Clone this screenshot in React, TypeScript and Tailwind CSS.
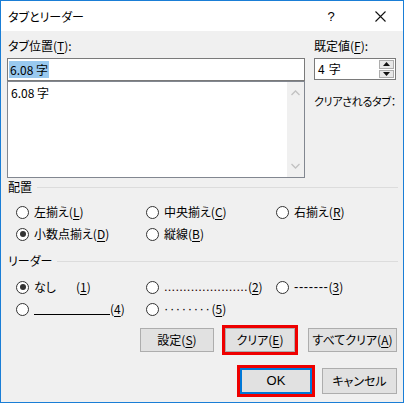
import React from 'react';

// Underlined access key inside a label
const Key: React.FC<{ k: string }> = ({ k }) => (
  <span className="underline underline-offset-[2px] decoration-1">{k}</span>
);

const Radio: React.FC<{ checked?: boolean }> = ({ checked }) => (
  <span className="w-[13px] h-[13px] rounded-full border border-[#333333] bg-white flex items-center justify-center shrink-0">
    {checked && <span className="w-[6px] h-[6px] rounded-full bg-[#333333]" />}
  </span>
);

const GroupHeader: React.FC<{ label: string }> = ({ label }) => (
  <div className="flex items-center h-[16px] pl-[1px]">
    <span>{label}</span>
    <span className="flex-1 h-px bg-[#dcdcdc] ml-[5px] mr-[-1px]" />
  </div>
);

const Option: React.FC<{ checked?: boolean; children: React.ReactNode }> = ({ checked, children }) => (
  <div className="flex items-center h-[20px]">
    <Radio checked={checked} />
    <span className="ml-[5px] flex items-center whitespace-nowrap">{children}</span>
  </div>
);

const Btn: React.FC<{ w: string; h?: string; focused?: boolean; children: React.ReactNode }> = ({ w, h = 'h-[24px]', focused, children }) => (
  <div
    className={`${w} ${h} flex items-center justify-center bg-[#e1e1e1] ${
      focused ? 'border-2 border-[#0078d7]' : 'border border-[#adadad]'
    }`}
  >
    {children}
  </div>
);

const RedFrame: React.FC<{ children: React.ReactNode }> = ({ children }) => (
  <div className="border-[3px] border-[#ee0000]">{children}</div>
);

const App: React.FC = () => {
  return (
    <div className="w-[404px] h-[403px] border border-[#1a7ed6] bg-[#f0f0f0] flex flex-col text-[12px] leading-[16px] text-black font-['Noto_Sans_CJK_JP',sans-serif] [font-feature-settings:'palt'] overflow-hidden">
      {/* title bar */}
      <div className="h-[30px] bg-white flex items-center pl-[7px] shrink-0">
        <span className="flex-1 mt-[1px]">タブとリーダー</span>
        <span className="w-[14px] text-center font-['Liberation_Sans',sans-serif] text-[13px] mr-[37px] mt-[1px]">?</span>
        <svg width="11" height="11" viewBox="0 0 11 11" className="mr-[17px]">
          <path d="M0.5 0.5 L10.5 10.5 M10.5 0.5 L0.5 10.5" stroke="#111" strokeWidth="1.1" fill="none" />
        </svg>
      </div>

      <div className="flex-1 flex flex-col pl-[6px] pr-[6px]">
        {/* tab stop position + default */}
        <div className="flex mt-[7px]">
          <div className="w-[298px] flex flex-col">
            <div className="h-[16px] pl-[1px]">
              タブ位置(<Key k="T" />):
            </div>
            <div className="mt-[4px] h-[23px] border border-[#7a7a7a] bg-white flex items-center pl-[1px]">
              <span className="bg-[#99c9ef] h-[17px] px-[1px] flex items-center">6.08 字</span>
            </div>
            <div className="h-[97px] border border-[#828790] bg-white flex">
              <div className="flex-1 pl-[3px] pt-[3px]">6.08 字</div>
              <div className="w-[17px] bg-[#f0f0f0] flex flex-col items-center justify-between py-[8px]">
                <svg width="9" height="6" viewBox="0 0 9 6">
                  <path d="M0.5 5 L4.5 1 L8.5 5" stroke="#c2c2c2" strokeWidth="1.3" fill="none" />
                </svg>
                <svg width="9" height="6" viewBox="0 0 9 6">
                  <path d="M0.5 1 L4.5 5 L8.5 1" stroke="#c2c2c2" strokeWidth="1.3" fill="none" />
                </svg>
              </div>
            </div>
          </div>

          <div className="ml-[9px] w-[82px] flex flex-col">
            <div className="h-[16px]">
              既定値(<Key k="F" />):
            </div>
            <div className="mt-[4px] h-[22px] w-[82px] border border-[#7a7a7a] bg-white flex items-center">
              <span className="flex-1 pl-[3px] flex">
                4<span className="ml-[4px]">字</span>
              </span>
              <div className="w-[15px] h-[18px] mr-[1px] flex flex-col gap-px">
                <div className="flex-1 border border-[#adadad] bg-[#e8e8e8] flex items-center justify-center">
                  <svg width="7" height="4" viewBox="0 0 7 4"><path d="M0 4 L3.5 0 L7 4 Z" fill="#111" /></svg>
                </div>
                <div className="flex-1 border border-[#adadad] bg-[#e8e8e8] flex items-center justify-center">
                  <svg width="7" height="4" viewBox="0 0 7 4"><path d="M0 0 L3.5 4 L7 0 Z" fill="#111" /></svg>
                </div>
              </div>
            </div>
            <div className="mt-[13px] h-[16px] whitespace-nowrap text-[11px] tracking-[-0.3px]">クリアされるタブ：</div>
          </div>
        </div>

        {/* alignment */}
        <div className="mt-[1px]">
          <GroupHeader label="配置" />
        </div>
        <div className="grid grid-cols-[130px_130px_1fr] gap-y-[2px] pl-[9px] mt-[7px]">
          <Option>左揃え(<Key k="L" />)</Option>
          <Option>中央揃え(<Key k="C" />)</Option>
          <Option>右揃え(<Key k="R" />)</Option>
          <Option checked>小数点揃え(<Key k="D" />)</Option>
          <Option>縦線(<Key k="B" />)</Option>
        </div>

        {/* leader */}
        <div className="mt-[9px]">
          <GroupHeader label="リーダー" />
        </div>
        <div className="grid grid-cols-[130px_130px_1fr] gap-y-[2px] pl-[9px] mt-[8px]">
          <Option checked>
            <span className="w-[42px]">なし</span>(<Key k="1" />)
          </Option>
          <Option>
            <span className="font-['Liberation_Sans',sans-serif] text-[13px] text-[#2a0000] tracking-[0.2px]">
              ......................
            </span>
            (<Key k="2" />)
          </Option>
          <Option>
            <span className="font-['Liberation_Sans',sans-serif] text-[13px] tracking-[0.6px]">-------</span>
            (<Key k="3" />)
          </Option>
          <Option>
            <span className="w-[76px] h-[12px] border-b border-black mb-[1px]" />
            (<Key k="4" />)
          </Option>
          <Option>
            <span className="font-['Liberation_Sans',sans-serif] text-[13px] tracking-[1.6px]">········</span>
            (<Key k="5" />)
          </Option>
        </div>

        {/* buttons */}
        <div className="flex justify-end items-center mt-[6px]">
          <Btn w="w-[74px]">
            設定(<Key k="S" />)
          </Btn>
          <div className="ml-[8px]">
            <RedFrame>
              <Btn w="w-[70px]">
                クリア(<Key k="E" />)
              </Btn>
            </RedFrame>
          </div>
          <div className="ml-[10px]">
            <Btn w="w-[89px]">
              すべてクリア(<Key k="A" />)
            </Btn>
          </div>
        </div>
        <div className="flex justify-end items-center mt-[10px]">
          <RedFrame>
            <Btn w="w-[72px]" h="h-[26px]" focused>
              <span className="font-['Liberation_Sans',sans-serif] text-[13px]">OK</span>
            </Btn>
          </RedFrame>
          <div className="ml-[7px]">
            <Btn w="w-[75px]" h="h-[26px]">
              キャンセル
            </Btn>
          </div>
        </div>
      </div>
    </div>
  );
};

export default App;
